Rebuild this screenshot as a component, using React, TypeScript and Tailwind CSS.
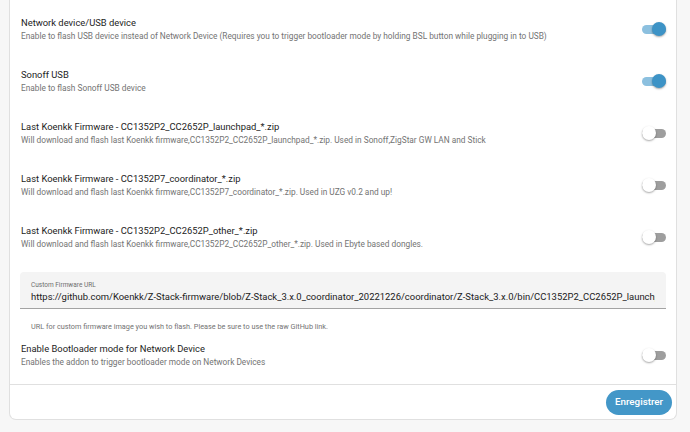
import React from 'react';

interface Row {
  title: string;
  desc: string;
  on: boolean;
}

const ROWS: Row[] = [
  {
    title: 'Network device/USB device',
    desc: 'Enable to flash USB device instead of Network Device (Requires you to trigger bootloader mode by holding BSL button while plugging in to USB)',
    on: true,
  },
  { title: 'Sonoff USB', desc: 'Enable to flash Sonoff USB device', on: true },
  {
    title: 'Last Koenkk Firmware - CC1352P2_CC2652P_launchpad_*.zip',
    desc: 'Will download and flash last Koenkk firmware,CC1352P2_CC2652P_launchpad_*.zip. Used in Sonoff,ZigStar GW LAN and Stick',
    on: false,
  },
  {
    title: 'Last Koenkk Firmware - CC1352P7_coordinator_*.zip',
    desc: 'Will download and flash last Koenkk firmware,CC1352P7_coordinator_*.zip. Used in UZG v0.2 and up!',
    on: false,
  },
  {
    title: 'Last Koenkk Firmware - CC1352P2_CC2652P_other_*.zip',
    desc: 'Will download and flash last Koenkk firmware,CC1352P2_CC2652P_other_*.zip. Used in Ebyte based dongles.',
    on: false,
  },
];

const URL =
  'https://github.com/Koenkk/Z-Stack-firmware/blob/Z-Stack_3.x.0_coordinator_20221226/coordinator/Z-Stack_3.x.0/bin/CC1352P2_CC2652P_launchpad_coordinator_20221226.zip';

const Toggle = ({ on }: { on: boolean }) => (
  <div className="relative w-[24px] h-[14px] shrink-0 flex items-center">
    <div className={`w-full h-[9px] rounded-full ${on ? 'bg-[#8cc0df]' : 'bg-[#9e9e9e]'}`} />
    <div
      className={`absolute top-0 w-[14px] h-[14px] rounded-full shadow-[0_1px_2px_rgba(0,0,0,0.35)] ${
        on ? 'right-0 bg-[#3d93c6]' : 'left-0 bg-white'
      }`}
    />
  </div>
);

const SettingRow = ({ title, desc, on, h = 'h-[52px]' }: Row & { h?: string }) => (
  <div className={`flex items-center justify-between ${h} pl-[11px] pr-[10px]`}>
    <div className="flex flex-col">
      <div className="text-[9.4px] leading-[14px] text-[#1c1c1c]">{title}</div>
      <div className="text-[8.3px] leading-[12px] text-[#737373]">{desc}</div>
    </div>
    <Toggle on={on} />
  </div>
);

export default function App() {
  return (
    <div className="w-[690px] h-[432px] bg-[#f7f7f7] overflow-hidden" style={{ fontFamily: 'Roboto, "Noto Sans", sans-serif' }}>
      <div className="ml-[9px] w-[668px] bg-white border border-t-0 border-[#e0e0e0] rounded-b-[7px] pt-[3px]">
        {ROWS.map((r, i) => (
          <SettingRow key={i} {...r} />
        ))}

        <div className="mx-[10px] mt-[9px] bg-[#f4f4f4] border-b border-[#a3a3a3] rounded-t-[4px] px-[11px] pt-[9px] pb-[5px]">
          <div className="text-[6.5px] leading-[9px] text-[#6e6e6e]">Custom Firmware URL</div>
          <input
            readOnly
            value={URL}
            className="block w-full bg-transparent outline-none p-0 text-[9.45px] leading-[13px] h-[13px] text-[#212121]"
            style={{ fontFamily: 'Roboto, "Noto Sans", sans-serif' }}
          />
        </div>
        <div className="ml-[21px] mt-[12px] text-[7.3px] leading-[12px] text-[#737373]">
          URL for custom firmware image you wish to flash. Please be sure to use the raw GitHub link.
        </div>

        <SettingRow
          title="Enable Bootloader mode for Network Device"
          desc="Enables the addon to trigger bootloader mode on Network Devices"
          on={false}
          h="h-[44px]"
        />

        <div className="mt-[7px] border-t border-[#e0e0e0] flex justify-end pt-[5px] pb-[4px] pr-[4px]">
          <button className="h-[25px] w-[66px] rounded-full bg-[#4397c8] text-white text-[9.8px] font-medium">
            Enregistrer
          </button>
        </div>
      </div>
    </div>
  );
}
